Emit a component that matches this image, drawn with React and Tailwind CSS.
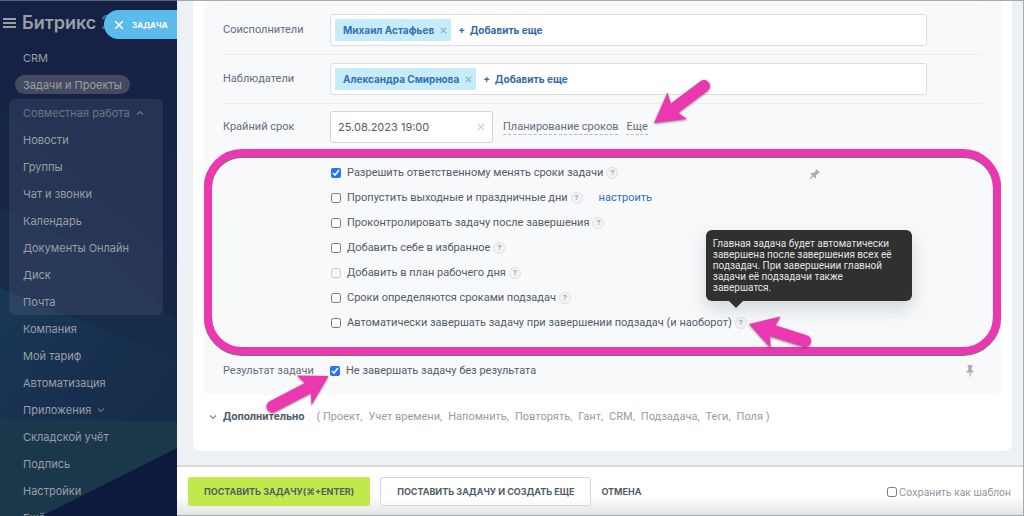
import React, { useState } from 'react';

const GROUP_ITEMS = ['Новости', 'Группы', 'Чат и звонки', 'Календарь', 'Документы Онлайн', 'Диск', 'Почта'];

const CHECKS = [
  { id: 'allow', label: 'Разрешить ответственному менять сроки задачи', checked: true },
  { id: 'weekend', label: 'Пропустить выходные и праздничные дни', link: 'настроить' },
  { id: 'control', label: 'Проконтролировать задачу после завершения' },
  { id: 'favorite', label: 'Добавить себе в избранное' },
  { id: 'plan', label: 'Добавить в план рабочего дня', disabled: true },
  { id: 'subtasks', label: 'Сроки определяются сроками подзадач' },
  { id: 'auto', label: 'Автоматически завершать задачу при завершении подзадач (и наоборот)', tip: true },
];

const EXTRA = ['Проект', 'Учет времени', 'Напомнить', 'Повторять', 'Гант', 'CRM', 'Подзадача', 'Теги', 'Поля'];

const Chevron = ({ up, className }) => (
  <svg viewBox="0 0 8 6" className={className} fill="none" stroke="currentColor" strokeWidth="1.2">
    <path d={up ? 'M1 4.5 4 1.5 7 4.5' : 'M1 1.5 4 4.5 7 1.5'} />
  </svg>
);

const Cross = ({ className }) => (
  <svg viewBox="0 0 8 8" className={className} fill="none" stroke="currentColor" strokeWidth="1.3">
    <path d="M1 1 7 7M7 1 1 7" />
  </svg>
);

const Pin = ({ className }) => (
  <svg viewBox="0 0 8 12" className={className} fill="currentColor">
    <path d="M1.500 0h5v1.200l-.8.5v3L7.400 6.400v1.200H4.600V11L4 12l-.6-1V7.600H.6V6.400L2.300 4.700v-3l-.8-.5z" />
  </svg>
);

// Pink pointer, drawn in the coordinates of its own box
const Arrow = ({ className, viewBox, head, tail }) => (
  <svg
    viewBox={viewBox}
    className={`pointer-events-none absolute z-20 max-w-none overflow-visible text-[#ec38b0] drop-shadow-[0_1px_1px_rgba(60,60,60,0.6)] ${className}`}
  >
    <path d={head} fill="currentColor" />
    <path d={tail} stroke="currentColor" strokeWidth="12" strokeLinecap="round" fill="none" />
  </svg>
);

const NavItem = ({ children, active }) => (
  <li className="flex h-[27px] items-center">
    <a
      href="#"
      className={active ? '-ml-2 flex h-[19px] items-center rounded-full bg-[#444a5f] px-2' : 'flex items-center'}
    >
      {children}
    </a>
  </li>
);

const Help = () => (
  <button
    type="button"
    aria-label="Подсказка"
    className="flex size-3 items-center justify-center rounded-full border border-[#dde1e4] bg-[#f2f4f5] text-[8px] font-bold leading-none text-[#a0a6ad]"
  >
    ?
  </button>
);

const Tooltip = () => (
  <div
    role="tooltip"
    className="absolute bottom-[28px] left-[-29px] z-10 w-[206px] rounded-md bg-[#303030] py-2 pl-[7px] pr-4 text-[10px] leading-[11px] text-[#e4e4e4] shadow-[0_8px_18px_rgba(90,110,130,0.25)]"
  >
    Главная задача будет автоматически завершена после завершения всех её подзадач. При завершении главной
    задачи её подзадачи также завершатся.
    <span className="absolute left-[23px] top-full border-x-[7px] border-t-[7px] border-x-transparent border-t-[#303030]" />
  </div>
);

const Sidebar = () => (
  <aside className="relative w-[177px] shrink-0 overflow-hidden border-t border-[#5a6172] bg-[#152144] font-['Inter',sans-serif] text-[#9b9ea6]">
    <svg viewBox="0 0 177 515" preserveAspectRatio="none" className="absolute inset-0 h-full w-full">
      <defs>
        <linearGradient id="side-a" x1="0" y1="0" x2="0" y2="1">
          <stop offset="0" stopColor="#152144" />
          <stop offset="1" stopColor="#152a4c" />
        </linearGradient>
        <linearGradient id="side-b" x1="0" y1="0" x2="1" y2="1">
          <stop offset="0" stopColor="#1a3756" />
          <stop offset="1" stopColor="#152746" />
        </linearGradient>
      </defs>
      <path d="M0 0h177v515H0z" fill="url(#side-a)" />
      <path d="M0 108 177 262v90L0 290z" fill="#162647" />
      <path d="M0 207 110 256 177 320v40H0z" fill="#172b4b" />
      <path d="M0 287 177 358v90L50 515H0z" fill="url(#side-b)" />
      <path d="M0 417 177 421v28L42 515H0z" fill="#1b374a" />
      <path d="M42 515 177 447v68z" fill="#0c1a3e" />
    </svg>

    <div className="relative">
      <div className="flex h-[43px] items-center pl-[3px]">
        <button type="button" aria-label="Меню" className="flex w-[13px] flex-col gap-[2px]">
          <span className="h-[2px] w-full bg-current" />
          <span className="h-[2px] w-full bg-current" />
          <span className="h-[2px] w-full bg-current" />
        </button>
        <span className="ml-[6px] text-lg font-semibold leading-6">
          Битрикс <span className="text-[#2e7c9c]">24</span>
        </span>
      </div>
      <button
        type="button"
        className="absolute right-0 top-[9px] flex h-[29px] w-[73px] items-center gap-2 rounded-l-full bg-[#5bbbea] pl-[10px] text-[8px] font-bold text-white"
      >
        <Cross className="size-[10px]" />
        ЗАДАЧА
      </button>

      <nav>
        <ul className="pl-[23px]">
          <NavItem>CRM</NavItem>
          <NavItem active>Задачи и Проекты</NavItem>
        </ul>
        <div className="ml-[9px] mr-[14px] mt-px rounded-md bg-[#8e94a8]/15 pl-[14px]">
          <button type="button" className="flex h-[27px] items-center gap-[6px] text-[#6f7586]">
            Совместная работа <Chevron up className="w-2" />
          </button>
          <ul>
            {GROUP_ITEMS.map((name) => (
              <NavItem key={name}>{name}</NavItem>
            ))}
          </ul>
        </div>
        <ul className="pl-[23px]">
          <NavItem>Компания</NavItem>
          <NavItem>Мой тариф</NavItem>
          <NavItem>Автоматизация</NavItem>
          <NavItem>
            Приложения <Chevron className="ml-[6px] w-2 opacity-60" />
          </NavItem>
          <NavItem>Складской учёт</NavItem>
          <NavItem>Подпись</NavItem>
          <NavItem>Настройки</NavItem>
          <NavItem>Ещё</NavItem>
        </ul>
      </nav>
    </div>
  </aside>
);

const PersonRow = ({ label, person }) => (
  <div className="flex h-[49px] items-center border-t border-[#eceef0]">
    <div className="w-[107px] shrink-0">{label}</div>
    <div className="mr-[55px] flex h-8 flex-1 items-center rounded-[3px] border border-[#d9dde1] bg-white pl-1 font-['Inter',sans-serif] text-[10px] font-bold">
      <span className="flex h-[22px] items-center gap-[6px] rounded-[1px] bg-[#c6ecfa] pl-2 pr-1 text-[#3570b8]">
        {person}
        <button type="button" aria-label="Удалить" className="text-[#8fa9b8]">
          <Cross className="size-[7px]" />
        </button>
      </span>
      <button type="button" className="ml-[7px] text-[#3568ad]">
        +&nbsp; Добавить еще
      </button>
    </div>
  </div>
);

const App = () => {
  const [checks, setChecks] = useState(() => Object.fromEntries(CHECKS.map((c) => [c.id, !!c.checked])));
  const [needResult, setNeedResult] = useState(true);
  const [deadline, setDeadline] = useState('25.08.2023 19:00');

  return (
    <div className="flex h-screen overflow-hidden font-['Roboto',sans-serif] text-[11px] leading-4 text-[#525c69]">
      <Sidebar />

      <main className="flex min-w-0 flex-1 flex-col border-y border-r border-[#a5a9b0] bg-[#edf1f4]">
        <div className="min-h-0 flex-1 overflow-hidden">
          <div className="ml-4 mr-[11px] rounded-b-lg bg-white px-[11px] pb-[13px]">
            <div className="rounded-b-md bg-[#f8f9fa] px-[19px] pt-1 text-[#636d7a]">
              <PersonRow label="Соисполнители" person="Михаил Астафьев" />
              <PersonRow label="Наблюдатели" person="Александра Смирнова" />

              {/* Deadline */}
              <div className="flex h-[46px] items-start border-t border-[#eceef0] pt-[7px]">
                <label htmlFor="deadline" className="w-[107px] shrink-0 leading-8">
                  Крайний срок
                </label>
                <div className="flex h-8 w-[163px] items-center rounded-[3px] border border-[#d0d5da] bg-white px-[7px]">
                  <input
                    id="deadline"
                    type="text"
                    value={deadline}
                    onChange={(e) => setDeadline(e.target.value)}
                    className="min-w-0 flex-1 font-['Inter',sans-serif] text-[11px] text-[#525c69] outline-none"
                  />
                  <button type="button" aria-label="Очистить" onClick={() => setDeadline('')} className="text-[#cfd3d7]">
                    <Cross className="size-2" />
                  </button>
                </div>
                <div className="ml-[10px] flex h-8 items-center gap-2">
                  <a href="#" className="border-b border-dashed border-[#b4b9bf] leading-[14px]">
                    Планирование сроков
                  </a>
                  <div className="relative flex">
                    <a href="#" className="border-b border-dashed border-[#b4b9bf] leading-[14px]">
                      Еще
                    </a>
                    <Arrow
                      className="bottom-[10px] left-[27px] h-[46px] w-[58px]"
                      viewBox="653 79 58 46"
                      head="M654 123 667.500 92.500 671 104 680 114 687 119z"
                      tail="M676 107 704 86"
                    />
                  </div>
                </div>
              </div>

              {/* Deadline options */}
              <section className="relative -mx-[19px] pb-5 pl-[127px] pt-[11px] text-[#525c69]">
                <div className="pointer-events-none absolute inset-0 rounded-[38px] border-8 border-[#ec38b0] drop-shadow-[0_1px_0_rgba(60,60,60,0.7)]" />
                <Pin className="absolute left-[606px] top-5 h-3 w-2 rotate-45 text-[#a9adb2]" />
                {CHECKS.map((c) => (
                  <div key={c.id} className="flex h-[25px] items-center">
                    <input
                      id={c.id}
                      type="checkbox"
                      checked={checks[c.id]}
                      disabled={c.disabled}
                      onChange={(e) => setChecks({ ...checks, [c.id]: e.target.checked })}
                      className="size-[10px] accent-[#2574f5]"
                    />
                    <label htmlFor={c.id} className="ml-[6px] mr-[3px]">
                      {c.label}
                    </label>
                    <div className="relative">
                      <Help />
                      {c.tip && <Tooltip />}
                      {c.tip && (
                        <Arrow
                          className="left-[13px] top-[-2px] h-[34px] w-[66px]"
                          viewBox="740 314 66 34"
                          head="M741 323 772.500 315.500 767 325 762 335 762.500 347z"
                          tail="M764 329.500 797 340"
                        />
                      )}
                    </div>
                    {c.link && (
                      <a href="#" className="ml-4 text-[#2f6fbe]">
                        {c.link}
                      </a>
                    )}
                  </div>
                ))}
              </section>

              {/* Task result */}
              <div className="relative flex h-10 items-center pb-[9px]">
                <div className="w-[107px] shrink-0">Результат задачи</div>
                <input
                  id="result"
                  type="checkbox"
                  checked={needResult}
                  onChange={(e) => setNeedResult(e.target.checked)}
                  className="size-[10px] accent-[#2574f5]"
                />
                <label htmlFor="result" className="ml-[6px] text-[#525c69]">
                  Не завершать задачу без результата
                </label>
                <Pin className="ml-auto mr-2 h-3 w-2 text-[#a9adb2]" />
                <Arrow
                  className="left-[42px] top-[19px] h-[40px] w-[64px]"
                  viewBox="265 374 64 40"
                  head="M328.500 376 297 375.500 305 383 311 393 311.500 405z"
                  tail="M308 388 272.500 406.500"
                />
              </div>
            </div>

            {/* Additional fields */}
            <div className="flex h-[43px] items-center pl-[5px]">
              <button type="button" className="flex items-center gap-[6px] font-bold">
                <Chevron className="w-2 text-[#80868e]" />
                Дополнительно
              </button>
              <div className="ml-3 flex gap-[6px] text-[#959ca6]">
                {EXTRA.map((name, i) => (
                  <span key={name}>
                    {i === 0 && '( '}
                    {name}
                    {i < EXTRA.length - 1 ? ',' : ' )'}
                  </span>
                ))}
              </div>
            </div>
          </div>
        </div>

        {/* Footer */}
        <footer className="flex h-[50px] shrink-0 items-center border-t-2 border-[#d5d9dc] bg-linear-to-b from-white from-60% to-[#e4e4e4] pl-[11px] pr-3 pt-px font-['Inter',sans-serif] text-[9px] font-bold text-[#525c69]">
          <button type="button" className="h-[29px] rounded-[2px] bg-[#c1e94c] px-4">
            ПОСТАВИТЬ ЗАДАЧУ(⌘+ENTER)
          </button>
          <button type="button" className="ml-[10px] h-[29px] rounded-[2px] border border-[#d3d8dc] bg-white/60 px-4">
            ПОСТАВИТЬ ЗАДАЧУ И СОЗДАТЬ ЕЩЕ
          </button>
          <button type="button" className="ml-[10px]">
            ОТМЕНА
          </button>
          <div className="ml-auto flex items-center gap-[2px] text-[10px] font-normal text-[#8d939b]">
            <input id="template" type="checkbox" className="size-[10px]" />
            <label htmlFor="template">Сохранить как шаблон</label>
          </div>
        </footer>
      </main>
    </div>
  );
};

export default App;
